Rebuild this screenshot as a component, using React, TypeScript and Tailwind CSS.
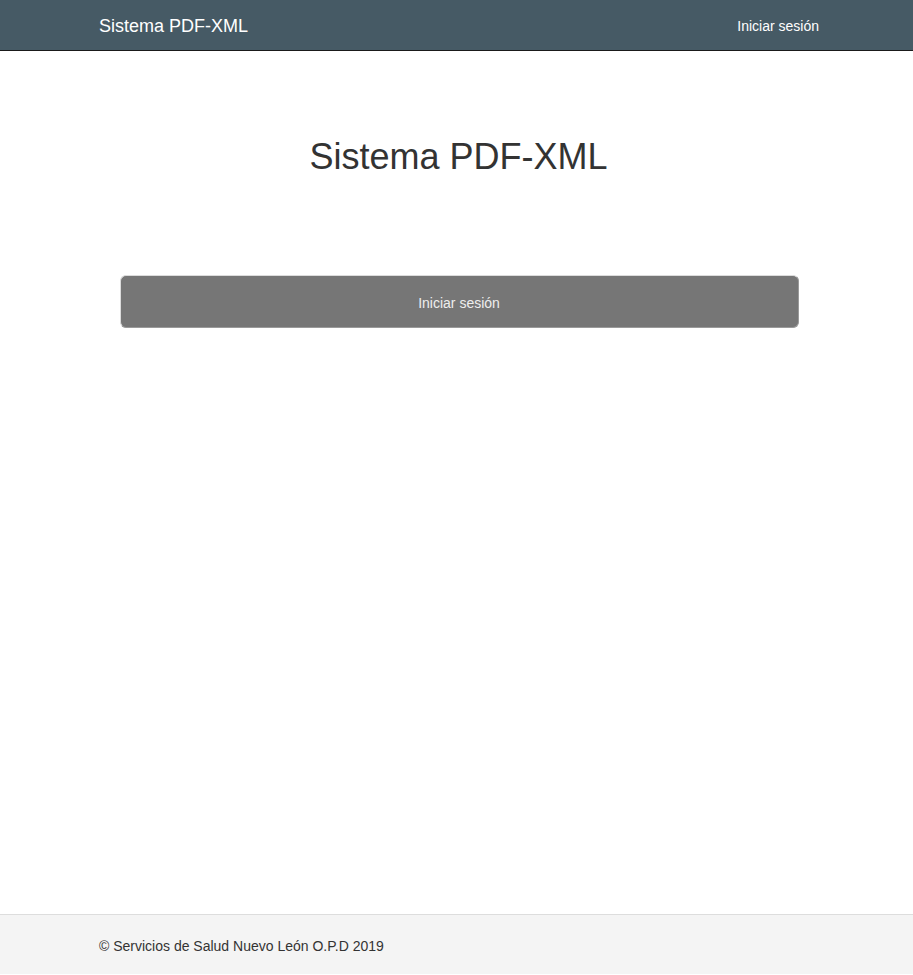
import React from "react";

export default function App() {
  return (
    <div className="min-h-[975px] flex flex-col bg-white text-[#333]" style={{ fontFamily: '"Liberation Sans", Arial, sans-serif' }}>
      <nav className="h-[51px] bg-[#465a65] border-b border-[#1a1a1a]">
        <div className="h-[50px] flex items-center justify-between pl-[99px] pr-[94px] pt-px">
          <span className="text-[18px] text-white leading-[20px]">Sistema PDF-XML</span>
          <span className="text-[14px] text-white leading-[20px]">Iniciar sesión</span>
        </div>
      </nav>
      <main className="flex-1 flex flex-col items-center pl-[4px]">
        <h1 className="mt-[86px] text-[36px] leading-[40px] font-normal text-[#333]">Sistema PDF-XML</h1>
        <button className="mt-[98px] w-[679px] h-[53px] ml-[1px] pt-[4px] rounded-[6px] bg-[#767676] border border-t-[#dcdcdc] border-l-[#dcdcdc] border-r-[#9a9a9a] border-b-[#9a9a9a] text-[14px] text-[#eeeeee]">
          Iniciar sesión
        </button>
      </main>
      <footer className="h-[60px] mb-px bg-[#f4f4f4] border-t border-[#dddddd] flex items-center pl-[99px] pt-[3px]">
        <span className="text-[14px] text-[#333]">© Servicios de Salud Nuevo León O.P.D 2019</span>
      </footer>
    </div>
  );
}
